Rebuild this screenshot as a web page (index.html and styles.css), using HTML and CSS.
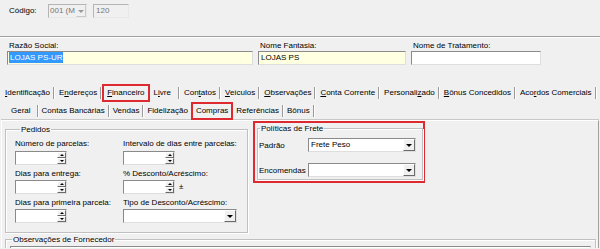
FILE: index.html
```html
<!DOCTYPE html>
<html lang="pt-BR">

<head>
    <meta charset="UTF-8">
    <meta name="viewport" content="width=device-width, initial-scale=1.0">
    <title>Cadastro de Fornecedor</title>
    <link rel="stylesheet" href="styles.css">
</head>

<body>
    <div class="top">
        <span class="code-label">Código:</span>
        <div class="combo off code-combo"><span class="val">001 (M</span><span class="drop"></span></div>
        <div class="edit off code-num">120</div>
    </div>
    <div class="sep"></div>

    <div class="names">
        <div class="field razao">
            <label>Razão Social:</label>
            <div class="edit yellow"><span class="sel">LOJAS PS-UR</span></div>
        </div>
        <div class="field fantasia">
            <label>Nome Fantasia:</label>
            <div class="edit yellow">LOJAS PS</div>
        </div>
        <div class="field tratamento">
            <label>Nome de Tratamento:</label>
            <div class="edit"></div>
        </div>
    </div>

    <!-- abas principais -->
    <div class="tabs main">
        <span class="tab"><u>I</u>dentificação</span><i class="bar"></i>
        <span class="tab">E<u>n</u>dereços</span><i class="bar"></i>
        <span class="tab active"><u>F</u>inanceiro</span><i class="bar hide"></i>
        <span class="tab livre">L<u>i</u>vre</span><i class="bar"></i>
        <span class="tab">Con<u>t</u>atos</span><i class="bar"></i>
        <span class="tab"><u>V</u>eículos</span><i class="bar"></i>
        <span class="tab"><u>O</u>bservações</span><i class="bar"></i>
        <span class="tab"><u>C</u>onta Corrente</span><i class="bar"></i>
        <span class="tab">Personali<u>z</u>ado</span><i class="bar"></i>
        <span class="tab"><u>B</u>ônus Concedidos</span><i class="bar"></i>
        <span class="tab">Aco<u>r</u>dos Comerciais</span><i class="bar"></i>
    </div>

    <!-- abas do financeiro -->
    <div class="tabs sub">
        <span class="tab geral">Geral</span><i class="bar"></i>
        <span class="tab">Contas Bancárias</span><i class="bar"></i>
        <span class="tab">Vendas</span><i class="bar"></i>
        <span class="tab">Fidelização</span><i class="bar hide"></i>
        <span class="tab active">Compras</span><i class="bar hide"></i>
        <span class="tab">Referências</span><i class="bar"></i>
        <span class="tab">Bônus</span><i class="bar"></i>
    </div>

    <div class="page">
        <div class="page-row">
            <fieldset class="group pedidos">
                <legend>Pedidos</legend>
                <div class="grid">
                    <label>Número de parcelas:</label>
                    <label>Intervalo de dias entre parcelas:</label>
                    <div class="edit spin"><span class="btns"><i class="up"></i><i class="down"></i></span></div>
                    <div class="edit spin"><span class="btns"><i class="up"></i><i class="down"></i></span></div>

                    <label>Dias para entrega:</label>
                    <label>% Desconto/Acréscimo:</label>
                    <div class="edit spin"><span class="btns"><i class="up"></i><i class="down"></i></span></div>
                    <div class="with-sign">
                        <div class="edit spin"><span class="btns"><i class="up"></i><i class="down"></i></span></div>
                        <span class="sign">±</span>
                    </div>

                    <label>Dias para primeira parcela:</label>
                    <label>Tipo de Desconto/Acréscimo:</label>
                    <div class="edit spin"><span class="btns"><i class="up"></i><i class="down"></i></span></div>
                    <div class="edit combo tipo"><span class="val"></span><span class="drop"></span></div>
                </div>
            </fieldset>

            <div class="mark">
                <fieldset class="group frete">
                    <legend>Políticas de Frete</legend>
                    <div class="frete-grid">
                        <label>Padrão</label>
                        <div class="edit combo"><span class="val">Frete Peso</span><span class="drop"></span></div>
                        <label>Encomendas</label>
                        <div class="edit combo"><span class="val"></span><span class="drop"></span></div>
                    </div>
                </fieldset>
            </div>
        </div>

        <fieldset class="group obs">
            <legend>Observações de Fornecedor</legend>
            <div class="edit memo"></div>
        </fieldset>
    </div>
</body>

</html>
```

FILE: styles.css
```css
* {
    margin: 0;
    padding: 0;
    box-sizing: border-box;
}

body {
    width: 600px;
    height: 249px;
    overflow: hidden;
    background-color: #f0f0f0;
    color: #000;
    font: 8px/11px "Liberation Sans", Arial, sans-serif;
}

u {
    text-decoration: underline;
}

/* cabeçalho */
.top {
    display: flex;
    align-items: flex-start;
    height: 36px;
    padding: 4px 0 0 9px;
}

.code-label {
    width: 39px;
    line-height: 14px;
}

.code-combo {
    width: 39px;
    margin-right: 6px;
}

.code-combo .val {
    padding-left: 0;
}

.code-num {
    width: 36px;
}

.sep {
    border-top: 1px solid #a0a0a0;
    border-bottom: 1px solid #fff;
}

/* campos comuns */
.edit {
    height: 14px;
    padding-left: 2px;
    background-color: #fff;
    border: 1px solid;
    border-color: #8a8a8a #dedede #dedede #8a8a8a;
    line-height: 12px;
    white-space: nowrap;
    overflow: hidden;
}

.edit.off {
    background-color: #f0f0f0;
    color: #777;
    border-color: #b5b5b5 #e8e8e8 #e8e8e8 #b5b5b5;
}

.yellow {
    background-color: #ffffe1;
}

.sel {
    display: inline-block;
    padding: 0 1px;
    background-color: #3399ff;
    color: #fff;
    line-height: 11px;
}

.combo {
    display: flex;
    height: 14px;
    padding-left: 2px;
    border: 1px solid;
    border-color: #8a8a8a #dedede #dedede #8a8a8a;
    background-color: #fff;
    line-height: 12px;
}

.combo.off {
    padding-left: 1px;
    background-color: #f0f0f0;
    color: #777;
    border-color: #b5b5b5 #e8e8e8 #e8e8e8 #b5b5b5;
}

.combo .val {
    flex: 1;
    white-space: nowrap;
}

.drop {
    display: flex;
    align-items: center;
    justify-content: center;
    width: 12px;
    background-color: #f0f0f0;
    border: 1px solid;
    border-color: #fff #6a6a6a #6a6a6a #fff;
}

.drop::after {
    content: "";
    border-left: 3px solid transparent;
    border-right: 3px solid transparent;
    border-top: 3px solid #000;
}

.off .drop {
    width: 10px;
    border-color: #f0f0f0 #c8c8c8 #c8c8c8 #f0f0f0;
}

.off .drop::after {
    border-top-color: #999;
}

/* razão social etc */
.names {
    display: flex;
    gap: 5px;
    padding: 3px 0 0 7px;
}

.field label {
    display: block;
    padding-left: 2px;
    line-height: 10px;
}

.razao {
    width: 246px;
}

.fantasia {
    width: 148px;
}

.tratamento {
    width: 130px;
}

.razao .edit {
    padding-left: 1px;
}

/* abas */
.tabs {
    display: flex;
    align-items: center;
    height: 18px;
    white-space: nowrap;
}

.tabs.main {
    margin-top: 19px;
    padding-left: 1px;
}

.tabs.sub {
    padding-left: 5px;
}

.tab {
    padding: 0 3px 0 4px;
    line-height: 18px;
}

.sub .tab {
    padding: 0 3px;
}

.tab.active {
    padding: 0 5px;
    outline: 2px solid #dc2a30;
    outline-offset: -2px;
}

.tab.livre {
    padding-right: 7px;
}

.sub .tab.geral {
    padding: 0 6px;
}

.bar {
    width: 2px;
    height: 12px;
    border-left: 1px solid #9a9a9a;
    border-right: 1px solid #fff;
}

.bar.hide {
    visibility: hidden;
    width: 0;
    border: 0;
}

/* página */
.page {
    margin-left: 1px;
    width: 598px;
    height: 128px;
    overflow: hidden;
    border-top: 1px solid #fff;
    border-left: 1px solid #fff;
    border-right: 1px solid #a0a0a0;
    box-shadow: 0 -1px 0 #c8c8c8;
}

.page-row {
    display: flex;
    align-items: flex-start;
    padding-left: 3px;
}

.group {
    border: 1px solid #c0c0c0;
    box-shadow: inset 1px 1px 0 #fff, 1px 1px 0 #fff;
}

.group legend {
    margin-left: 5px;
    padding: 0 1px;
    line-height: 11px;
}

.pedidos {
    width: 243px;
    height: 109px;
    margin-top: 3px;
    padding: 3px 0 0 9px;
}

.grid {
    display: grid;
    grid-template-columns: 108px 1fr;
    grid-auto-rows: 11px 14px;
    row-gap: 2px;
}

.grid label:nth-of-type(3),
.grid label:nth-of-type(4),
.grid label:nth-of-type(5),
.grid label:nth-of-type(6) {
    margin-top: 1px;
}

.spin {
    display: flex;
    justify-content: flex-end;
    width: 52px;
    padding: 0;
}

.btns {
    display: flex;
    flex-direction: column;
    width: 9px;
}

.btns i {
    flex: 1;
    display: flex;
    align-items: center;
    justify-content: center;
    background-color: #f0f0f0;
    border: 1px solid;
    border-color: #fff #6a6a6a #6a6a6a #fff;
}

.btns .up::after {
    content: "";
    border-left: 2px solid transparent;
    border-right: 2px solid transparent;
    border-bottom: 2px solid #000;
}

.btns .down::after {
    content: "";
    border-left: 2px solid transparent;
    border-right: 2px solid transparent;
    border-top: 2px solid #000;
}

.with-sign {
    display: flex;
    align-items: center;
    gap: 4px;
}

.sign {
    line-height: 12px;
}

.tipo {
    width: 114px;
}

.mark {
    margin-left: 5px;
    width: 172px;
    padding: 0 2px 1px 2px;
    border: 2px solid #dc2a30;
}

.frete {
    width: 166px;
    padding: 4px 6px 2px 1px;
}

.frete legend {
    margin-left: 1px;
}

.frete-grid {
    display: grid;
    grid-template-columns: 49px 108px;
    grid-auto-rows: 14px;
    row-gap: 11px;
    align-items: center;
}

.obs {
    width: 591px;
    margin: 1px 0 0 3px;
    height: 20px;
}

.obs legend {
    margin-left: 6px;
}

.memo {
    height: 10px;
    margin: 1px 4px 0 4px;
}
```
